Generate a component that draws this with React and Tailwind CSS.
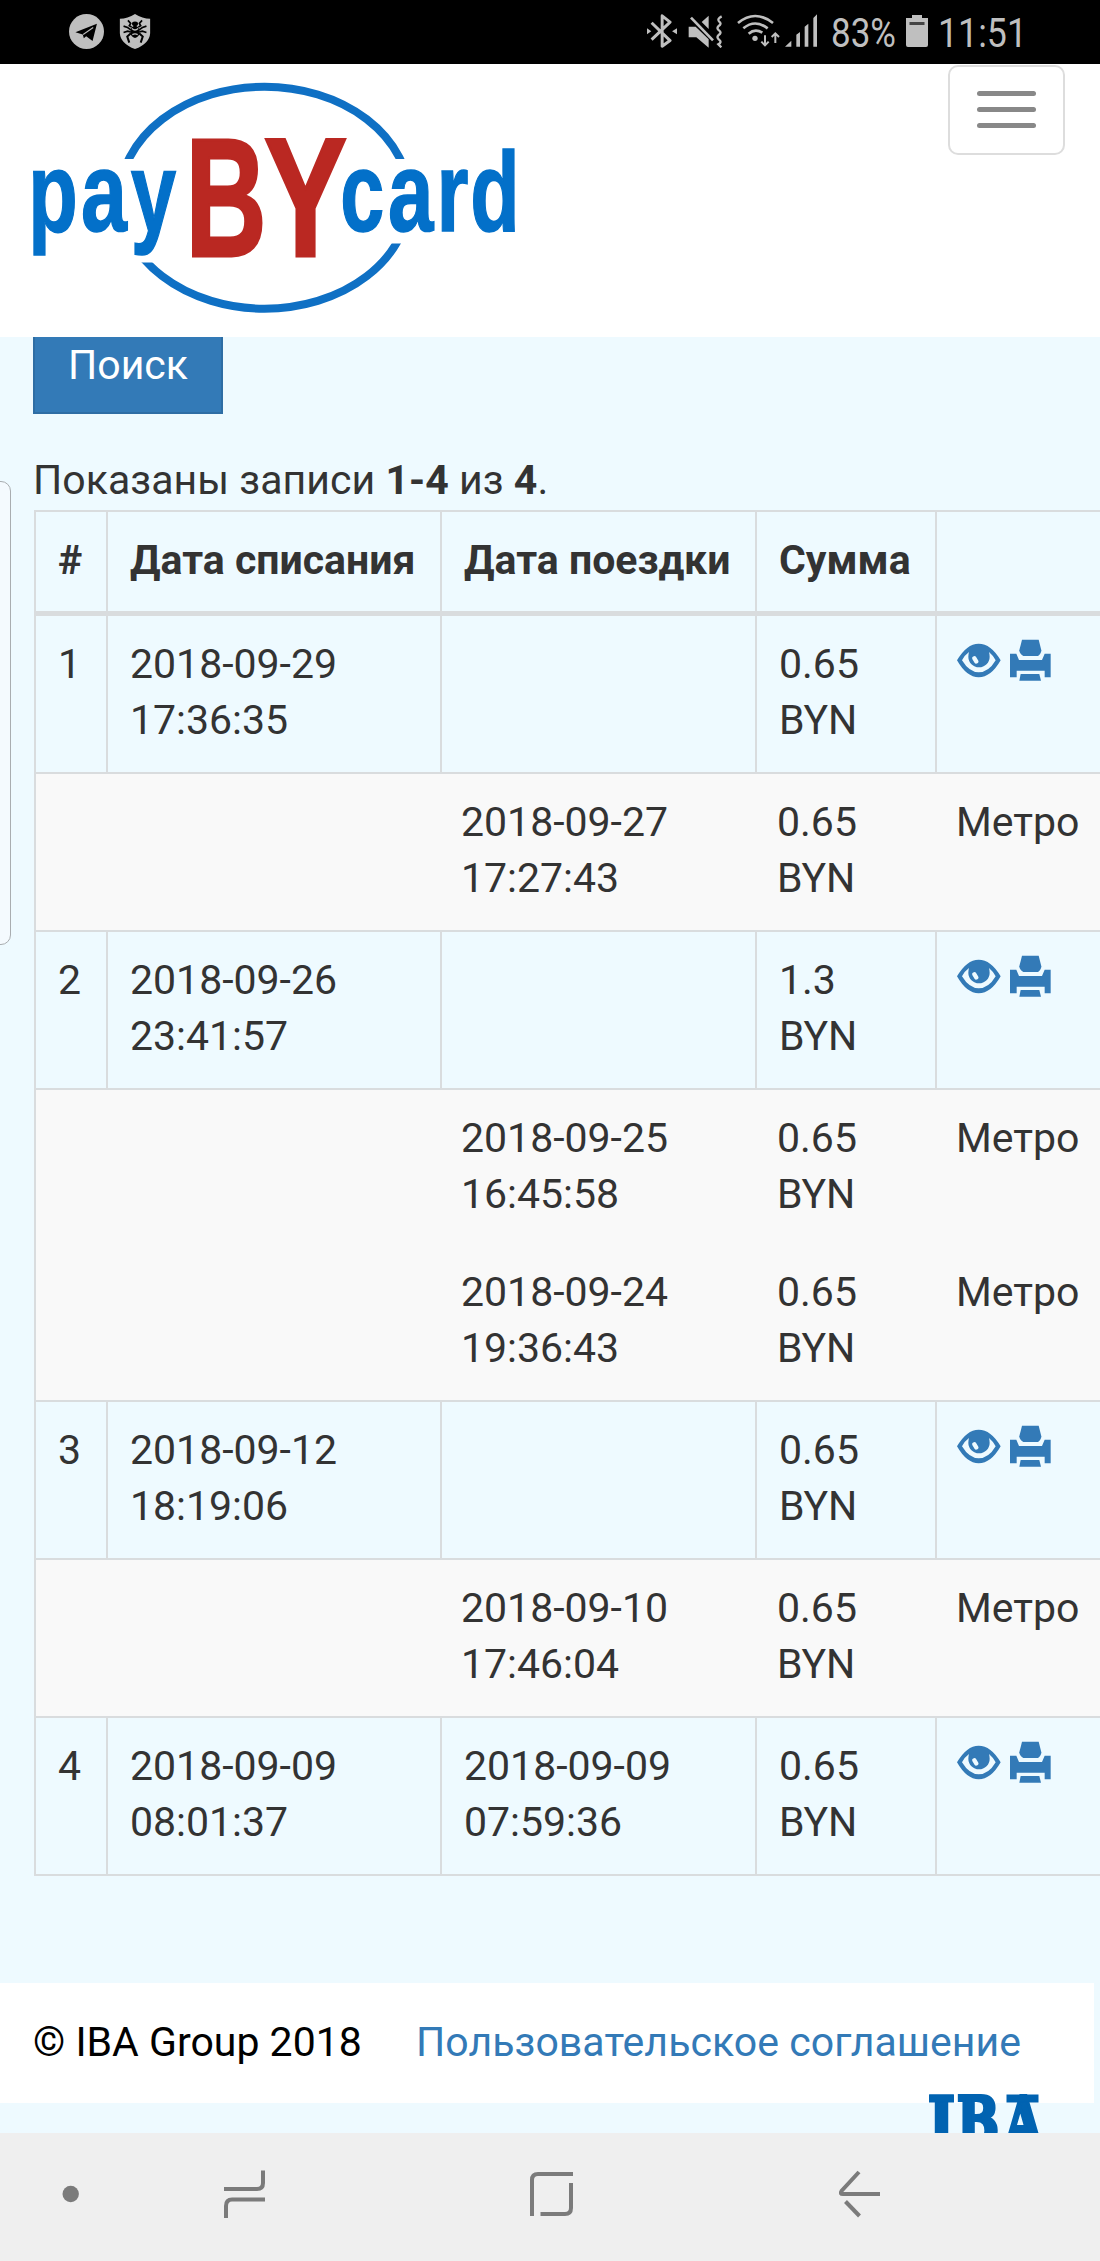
import React from 'react';

const payments = [
  {
    id: 1,
    charged: ['2018-09-29', '17:36:35'],
    amount: '0.65',
    trips: [{ date: '2018-09-27', time: '17:27:43', amount: '0.65', place: 'Метро' }],
  },
  {
    id: 2,
    charged: ['2018-09-26', '23:41:57'],
    amount: '1.3',
    trips: [
      { date: '2018-09-25', time: '16:45:58', amount: '0.65', place: 'Метро' },
      { date: '2018-09-24', time: '19:36:43', amount: '0.65', place: 'Метро' },
    ],
  },
  {
    id: 3,
    charged: ['2018-09-12', '18:19:06'],
    amount: '0.65',
    trips: [{ date: '2018-09-10', time: '17:46:04', amount: '0.65', place: 'Метро' }],
  },
  {
    id: 4,
    charged: ['2018-09-09', '08:01:37'],
    trip: ['2018-09-09', '07:59:36'],
    amount: '0.65',
    trips: [],
  },
];

// Condensed logo lettering, each letter squeezed to its own width
const logoLetters = [
  { char: 'p', x: 28.2, y: 230.5, width: 49.5, size: 113, stroke: 1.5, color: '#0370c9' },
  { char: 'a', x: 81, y: 230.5, width: 46, size: 113, stroke: 1.5, color: '#0370c9' },
  { char: 'y', x: 130.7, y: 230.5, width: 45.4, size: 113, stroke: 1.5, color: '#0370c9' },
  { char: 'B', x: 185.5, y: 255.5, width: 81, size: 168, stroke: 3, color: '#ba2822' },
  { char: 'Y', x: 264, y: 255.5, width: 83, size: 168, stroke: 3, color: '#ba2822' },
  { char: 'c', x: 340.2, y: 230.5, width: 44, size: 113, stroke: 1.5, color: '#0370c9' },
  { char: 'a', x: 387.9, y: 230.5, width: 45.5, size: 113, stroke: 1.5, color: '#0370c9' },
  { char: 'r', x: 436.6, y: 230.5, width: 32, size: 113, stroke: 1.5, color: '#0370c9' },
  { char: 'd', x: 470.3, y: 230.5, width: 49.4, size: 113, stroke: 1.5, color: '#0370c9' },
];

const StatusBar = () => (
  <div className="h-16 bg-black flex items-start justify-between pt-[14px] pl-[69px] pr-[76px] text-[#bfbfbf]">
    <div className="flex gap-[15px]">
      {/* Telegram */}
      <svg className="w-[35px] h-[35px]" viewBox="27 27 104 104">
        <circle cx="79" cy="79" r="52" fill="currentColor" />
        <path d="M46 81 L110 56 L97 107 L78 93 L71 99 L68 88Z" fill="#000" />
        <path d="M69 88 L99 67" stroke="currentColor" strokeWidth="3" />
      </svg>
      {/* Antivirus shield */}
      <svg className="w-[32px] h-[35px]" viewBox="177 27 94 104">
        <path d="M224 27 Q202 41 179 41 V84 Q181 115 224 131 Q267 115 269 84 V41 Q246 41 224 27Z" fill="currentColor" />
        <g fill="none" stroke="#000" strokeWidth="5">
          <path d="M203 46 L211 55 L207 62 L214 66" />
          <path d="M245 46 L237 55 L241 62 L234 66" />
          <path d="M190 63 L202 67 L212 74 M258 63 L246 67 L236 74" />
          <path d="M190 82 L202 78 L211 80 M258 82 L246 78 L237 80" />
          <path d="M212 84 L201 94 L207 112 M236 84 L247 94 L241 112" strokeWidth="6" />
        </g>
        <ellipse cx="224" cy="56" rx="9" ry="7" fill="#000" />
        <ellipse cx="224" cy="80" rx="14" ry="18" fill="#000" />
        <path d="M215 70 Q224 79 233 70 M216 88 Q224 84 232 88" stroke="#bfbfbf" strokeWidth="4" fill="none" />
      </svg>
    </div>

    <div className="flex items-start">
      {/* Bluetooth */}
      <svg className="w-[30px] h-[34px] mr-[11px]" viewBox="36 28 91 102">
        <path d="M50 54 L106 108 L82 125 V33 L106 52 L50 105" fill="none" stroke="currentColor" strokeWidth="9" strokeLinejoin="round" />
        <path d="M36 71 L49 80 L36 89Z M127 71 L112 80 L127 89Z" fill="currentColor" />
      </svg>
      {/* Muted, vibrate */}
      <svg className="w-[35px] h-[34px] mr-[14px]" viewBox="159 28 105 102">
        <path d="M161 66 H182 L221 104 V129 L184 98 H161Z M200 52 L221 33 V73Z" fill="currentColor" />
        <path d="M168 39 L234 107" stroke="currentColor" strokeWidth="8" />
        <path d="M260 35 Q246 42 252 50 Q262 57 250 65 Q244 71 252 77 Q262 84 250 92 Q244 98 252 105 Q262 112 250 119 L259 128" fill="none" stroke="currentColor" strokeWidth="7" />
      </svg>
      {/* Wi-Fi */}
      <svg className="w-[43px] h-[34px] mr-[5px]" viewBox="304 28 129 102">
        <g fill="none" stroke="currentColor" strokeWidth="8">
          <path d="M307 55 Q358 13 412 55" />
          <path d="M323 71 Q358 42 396 71" />
          <path d="M339 87 Q358 70 380 84" />
          <path d="M388 92 V121 M377 111 L388 122 L399 111" strokeWidth="6" />
          <path d="M419 115 V87 M408 97 L419 86 L430 97" strokeWidth="6" />
        </g>
        <circle cx="358" cy="101" r="8" fill="currentColor" />
      </svg>
      {/* Cell signal */}
      <svg className="w-[33px] h-[34px] mr-[14px]" viewBox="450 28 99 102">
        <path d="M450 126 L469 108 V126Z M484 90 L495 82 V126 H484Z M509 66 L520 57 V126 H509Z M535 40 L546 29 V126 H535Z" fill="currentColor" />
      </svg>
      <svg className="w-[65px] h-[34px] mr-[9px] overflow-visible" viewBox="0 0 65 34">
        <text x="-1" y="32.5" fontSize="41" textLength="65" lengthAdjust="spacingAndGlyphs" fill="currentColor" className="font-[Roboto,sans-serif]">83%</text>
      </svg>
      {/* Battery */}
      <svg className="w-[22px] h-[34px] mr-[12px]" viewBox="0 0 22 34">
        <path d="M6 1 H16 V4 H22 V31 Q22 33 20 33 H2 Q0 33 0 31 V4 H6Z" fill="currentColor" />
        <rect x="3.5" y="8" width="15" height="3" fill="#444" />
      </svg>
      <svg className="w-[84px] h-[34px] overflow-visible" viewBox="0 0 84 34">
        <text x="-2" y="32.5" fontSize="41" textLength="89" lengthAdjust="spacingAndGlyphs" fill="currentColor" className="font-[Roboto,sans-serif]">11:51</text>
      </svg>
    </div>
  </div>
);

const Header = () => (
  <header className="h-[273px] bg-white flex items-start justify-between pr-[35px]">
    <svg className="w-[540px] h-[273px]" viewBox="0 64 540 273">
      <clipPath id="ringTop"><rect x="100" y="70" width="340" height="89" /></clipPath>
      <clipPath id="ringBottom"><path d="M100 262.5 H300 V243.5 H440 V330 H100Z" /></clipPath>
      <g fill="none" stroke="#0f70c4" strokeWidth="8">
        <ellipse cx="264.5" cy="197.7" rx="144.7" ry="111" clipPath="url(#ringTop)" />
        <ellipse cx="264.5" cy="197.7" rx="144.7" ry="111" clipPath="url(#ringBottom)" />
      </g>
      {logoLetters.map((letter, index) => (
        <text
          key={index}
          x={letter.x}
          y={letter.y}
          fontSize={letter.size}
          textLength={letter.width}
          lengthAdjust="spacingAndGlyphs"
          fill={letter.color}
          stroke={letter.color}
          strokeWidth={letter.stroke}
          className="font-['Liberation_Sans',sans-serif] font-bold"
        >
          {letter.char}
        </text>
      ))}
    </svg>
    <button className="mt-px w-[117px] h-[90px] rounded-[10px] border-2 border-[#ddd] flex flex-col items-center justify-center gap-[11px] pb-[2px]">
      <span className="w-[59px] h-[5px] rounded-full bg-[#888]" />
      <span className="w-[59px] h-[5px] rounded-full bg-[#888]" />
      <span className="w-[59px] h-[5px] rounded-full bg-[#888]" />
    </button>
  </header>
);

const EyeIcon = () => (
  <svg className="w-[46px] h-[45px]" viewBox="48 55 138 135" fill="#337ab7">
    <path
      fillRule="evenodd"
      d="M51 122 Q80 72 116 72 Q153 72 182 122 Q153 173 116 173 Q80 173 51 122Z M87 97 Q72 108 66 122 Q88 158 116 158 Q146 158 167 122 Q160 108 147 97 Q149 104 149 111 A32 32 0 0 1 85 111 Q85 104 87 97Z"
    />
    <rect x="99" y="109" width="13" height="24" rx="6" fill="#eefaff" transform="rotate(-32 105 120)" />
  </svg>
);

const PrintIcon = () => (
  <svg className="w-[43px] h-[45px]" viewBox="207 55 129 135" fill="#337ab7">
    <path d="M246 60 H296 L304 92 Q304 102 294 109 H250 Q238 102 238 92Z" />
    <path d="M210 102 H229 L237 121 H306 L314 102 H332 V173 H314 V153 H230 V173 H210Z" />
    <path d="M242 163 H298 L303 183 H238Z" />
  </svg>
);

const Cell = ({ className = '', children }) => (
  <div className={`border-l-2 border-[#d9dcde] pl-[22px] pt-[20px] ${className}`}>{children}</div>
);

const PaymentRow = ({ payment }) => (
  <>
    <div className="grid grid-cols-[72px_334px_315px_180px_1fr] h-[158px] border-t-2 border-[#d9dcde]">
      <Cell>{payment.id}</Cell>
      <Cell>
        <p>{payment.charged[0]}</p>
        <p>{payment.charged[1]}</p>
      </Cell>
      <Cell>
        {payment.trip && (
          <>
            <p>{payment.trip[0]}</p>
            <p>{payment.trip[1]}</p>
          </>
        )}
      </Cell>
      <Cell>
        <p>{payment.amount}</p>
        <p>BYN</p>
      </Cell>
      <Cell>
        <div className="flex gap-[7px] -ml-[3px] mt-[2px]">
          <EyeIcon />
          <PrintIcon />
        </div>
      </Cell>
    </div>
    {payment.trips.length > 0 && (
      <div className="border-t-2 border-l-2 border-[#d9dcde] bg-[#f9f9f9] pt-[20px] pb-[24px] flex flex-col gap-[42px]">
        {payment.trips.map((trip) => (
          <div key={trip.date} className="grid grid-cols-[425px_316px_179px_1fr] leading-[56px] h-[112px]">
            <span />
            <div>
              <p>{trip.date}</p>
              <p>{trip.time}</p>
            </div>
            <div>
              <p>{trip.amount}</p>
              <p>BYN</p>
            </div>
            <p>{trip.place}</p>
          </div>
        ))}
      </div>
    )}
  </>
);

const NavigationBar = () => (
  <nav className="h-[128px] bg-[#efefef] flex items-start pt-[36px] pl-[62px]">
    <svg className="w-[18px] h-[50px] mr-[143px]" viewBox="62 2169 18 50">
      <circle cx="70.7" cy="2194" r="8.2" fill="#7b7b7b" />
    </svg>
    <svg className="w-[44px] h-[50px] mr-[262px]" viewBox="223 2169 44 50" fill="none" stroke="#7b7b7b" strokeWidth="4">
      <path d="M263 2170.5 V2183 Q263 2189 257 2189 H224" />
      <path d="M265 2199.5 H232 Q226 2199.5 226 2206 V2218" />
    </svg>
    <svg className="w-[46px] h-[50px] mr-[262px]" viewBox="529 2169 46 50" fill="none" stroke="#7b7b7b" strokeWidth="4">
      <path d="M532 2216 V2180 Q532 2174 538 2174 H573" />
      <path d="M571 2183 V2208 Q571 2214 565 2214 H540.5" />
    </svg>
    <svg className="w-[46px] h-[50px]" viewBox="837 2169 46 50" fill="none" stroke="#7b7b7b" strokeWidth="4">
      <path d="M859 2172 L841.5 2191 Q839.5 2194 843 2194 H880" />
      <path d="M845.5 2201.5 L859.5 2216" />
    </svg>
  </nav>
);

export default function App() {
  return (
    <div className="relative w-[1100px] h-[2261px] overflow-hidden bg-[#eefaff] text-[#333] font-[Roboto,sans-serif] text-[41px] leading-[56px] flex flex-col">
      <StatusBar />
      <Header />

      <main className="pl-[33px] h-[1646px]">
        <button className="block w-[190px] h-[77px] border-2 border-t-0 border-[#2e6da4] bg-[#337ab7] text-white pb-[20px]">Поиск</button>
        <p className="mt-[38px] h-[58px] tracking-[0.05px]">
          Показаны записи <b>1-4</b> из <b>4</b>.
        </p>

        {/* Payments table, runs past the right edge of the screen */}
        <div className="ml-px w-[1120px] border-b-2 border-[#d9dcde]">
          <div className="grid grid-cols-[72px_334px_315px_180px_1fr] h-[104px] border-t-2 border-b-[3px] border-[#d9dcde] font-bold whitespace-nowrap">
            <Cell>#</Cell>
            <Cell>Дата списания</Cell>
            <Cell>Дата поездки</Cell>
            <Cell>Сумма</Cell>
            <Cell />
          </div>
          {payments.map((payment) => (
            <PaymentRow key={payment.id} payment={payment} />
          ))}
        </div>
      </main>

      <div className="h-[150px]">
        <footer className="w-[1094px] h-[120px] bg-white text-black flex pl-[33px] pt-[31px]">
          <span className="w-[383px]">© IBA Group 2018</span>
          <a className="text-[#337ab7] whitespace-nowrap tracking-[0.06px]">Пользовательское соглашение</a>
        </footer>
        {/* Company logo, cut off by the navigation bar */}
        <svg className="absolute left-[928px] top-[2093px] w-[114px] h-[40px]" viewBox="0 0 114 40" fill="#0163b1" stroke="#0163b1">
          <g className="font-['DejaVu_Serif',serif] font-bold" fontSize="67">
            <text x="0" y="51.5" strokeWidth="3" textLength="27" lengthAdjust="spacingAndGlyphs">I</text>
            <text x="29" y="51.5" strokeWidth="4" textLength="42" lengthAdjust="spacingAndGlyphs">B</text>
            <text x="77" y="51.5" strokeWidth="4" textLength="37" lengthAdjust="spacingAndGlyphs">A</text>
          </g>
          <rect x="79" y="2" width="31" height="7" />
          <rect x="1.5" y="2" width="24" height="7" />
        </svg>
      </div>

      <NavigationBar />

      {/* Edge panel handle */}
      <div className="absolute -left-[10px] top-[481px] w-[21px] h-[464px] rounded-[10px] border border-[#a9adb0] bg-[#f4fafe]" />
    </div>
  );
}
